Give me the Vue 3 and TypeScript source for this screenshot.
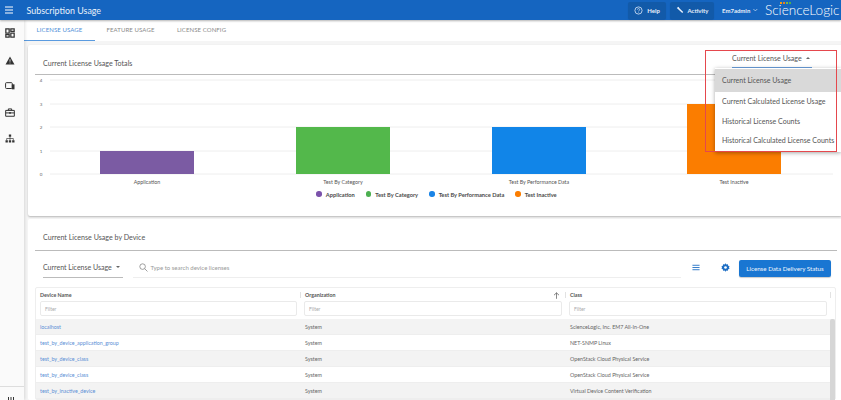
<script setup lang="ts">
const tabs = ['LICENSE USAGE', 'FEATURE USAGE', 'LICENSE CONFIG']
const ticks = [
  { label: '4', y: 5 },
  { label: '3', y: 29 },
  { label: '2', y: 52 },
  { label: '1', y: 76 },
  { label: '0', y: 99 },
]
const bars = [
  { name: 'Application', x: 65, w: 94, top: 76, color: '#7b5ba3', dot: '#7b52ab', cx: 112 },
  { name: 'Test By Category', x: 261, w: 94, top: 52, color: '#53b84b', dot: '#4caf50', cx: 308 },
  { name: 'Test By Performance Data', x: 457, w: 94, top: 52, color: '#1185e8', dot: '#1a84e6', cx: 504 },
  { name: 'Test Inactive', x: 652, w: 94, top: 29, color: '#fb7d00', dot: '#fb7d00', cx: 699 },
]
const menu = ['Current License Usage', 'Current Calculated License Usage', 'Historical License Counts', 'Historical Calculated License Counts']
const rows = [
  { d: 'localhost', o: 'System', c: 'ScienceLogic, Inc. EM7 All-In-One' },
  { d: 'test_by_device_application_group', o: 'System', c: 'NET-SNMP Linux' },
  { d: 'test_by_device_class', o: 'System', c: 'OpenStack Cloud Physical Service' },
  { d: 'test_by_device_class', o: 'System', c: 'OpenStack Cloud Physical Service' },
  { d: 'test_by_inactive_device', o: 'System', c: 'Virtual Device Content Verification' },
]
</script>

<template>
  <div class="app">
    <header class="top">
      <svg class="burger" width="10" height="8" viewBox="0 0 10 8"><path d="M1 1h8M1 4h8M1 7h8" stroke="#fff" stroke-width="1"/></svg>
      <span class="title">Subscription Usage</span>
      <span class="spacer"></span>
      <button class="hbtn help">
        <svg width="9" height="9" viewBox="0 0 10 10"><circle cx="5" cy="5" r="4" fill="none" stroke="#dbe7f7" stroke-width=".9"/><path d="M3.8 4c0-1.5 2.5-1.5 2.5 0 0 1-1.2 1-1.2 2M5.1 7.2v.6" fill="none" stroke="#dbe7f7" stroke-width=".8"/></svg>
        Help
      </button>
      <button class="hbtn activity">
        <svg width="8" height="8" viewBox="0 0 10 10"><path d="M1 2.5 3 .8l1.6 2.4L9 7.6 7.8 8.9 3.4 4.6z" fill="#e8f0fb"/></svg>
        Activity
      </button>
      <span class="user">Em7admin
        <svg width="6" height="4" viewBox="0 0 6 4"><path d="M.5.7 3 3.2 5.500.7" fill="none" stroke="#e8f0fb" stroke-width=".8"/></svg>
      </span>
      <span class="logo">
        <span class="dots"><i class="d1"></i><i class="d2"></i><i class="d3"></i><i class="d4"></i></span>
        ScienceLogic
      </span>
    </header>
    <div class="body">
      <aside class="side">
        <div class="side-icons">
          <svg width="12" height="12" viewBox="0 0 12 12"><path d="M1 1h4v5H1zM7 1h4v3H7zM7 6h4v5H7zM1 8h4v3H1z" fill="none" stroke="#333" stroke-width="1.500"/></svg>
          <svg width="12" height="11" viewBox="0 0 12 11"><path d="M6 .8 11.400 10.400H.6z" fill="#333"/><path d="M6 4v3M6 8v1" stroke="#fff" stroke-width=".9"/></svg>
          <svg width="12" height="10" viewBox="0 0 12 10"><rect x=".7" y="1" width="8" height="7" rx="1" fill="none" stroke="#333" stroke-width="1.200"/><rect x="8.200" y="3" width="3.200" height="6" fill="#333"/></svg>
          <svg width="12" height="11" viewBox="0 0 12 11"><path d="M4 3V1.200h4V3M.8 3h10.400v7H.8zM.8 6h10.400" fill="none" stroke="#333" stroke-width="1.200"/><rect x="5" y="5" width="2" height="2" fill="#333"/></svg>
          <svg width="12" height="11" viewBox="0 0 12 11"><path d="M4.600.8h2.800v2.600H4.600zM.6 7.600h2.800v2.600H.6zM4.600 7.600h2.800v2.600H4.600zM8.600 7.600h2.800v2.600H8.600z" fill="#333"/><path d="M6 3.400v4M2 7.600V5.500h8v2.100" fill="none" stroke="#333" stroke-width=".8"/></svg>
        </div>
        <div class="side-foot">
          <svg width="8" height="3" viewBox="0 0 8 3"><path d="M.5 0v3M3 0v3M5.500 0v3" stroke="#333" stroke-width="1"/></svg>
        </div>
      </aside>
      <main class="main">
        <nav class="tabs">
          <span v-for="(t, i) in tabs" :key="t" class="tab" :class="{ on: i === 0 }">{{ t }}</span>
        </nav>
        <section class="card totals">
          <div class="card-head">
            <span>Current License Usage Totals</span>
          </div>
          <svg class="chart" width="813" height="125" viewBox="0 0 813 125">
            <g v-for="t in ticks" :key="t.label">
              <line x1="15" x2="798" :y1="t.y" :y2="t.y" stroke="#eeeeee" stroke-width="1"/>
              <text x="6" :y="t.y + 2" class="tick" text-anchor="middle">{{ t.label }}</text>
            </g>
            <g v-for="b in bars" :key="b.name">
              <rect :x="b.x" :y="b.top" :width="b.w" :height="99 - b.top" :fill="b.color"/>
              <text :x="b.cx" y="109" class="cat" text-anchor="middle">{{ b.name }}</text>
            </g>
          </svg>
          <div class="legend">
            <span v-for="b in bars" :key="b.name" class="leg">
              <i :style="{ background: b.dot }"></i>{{ b.name }}
            </span>
          </div>
        </section>
        <section class="card devices">
          <div class="card-head"><span>Current License Usage by Device</span></div>
          <div class="toolbar">
            <span class="select">Current License Usage <b class="caret"></b></span>
            <div class="search">
              <svg width="9" height="9" viewBox="0 0 10 10"><circle cx="4" cy="4" r="3.100" fill="none" stroke="#888" stroke-width=".9"/><path d="M6.300 6.300 9.400 9.400" stroke="#888" stroke-width=".9"/></svg>
              <span>Type to search device licenses</span>
            </div>
            <svg class="tool-a" width="8" height="7" viewBox="0 0 9 7"><path d="M.5 1h8M.5 3.500h8M.5 6h8" stroke="#1f6fc4" stroke-width="1"/></svg>
            <svg class="tool-b" width="9" height="9" viewBox="0 0 10 10"><path d="M5 .4 6 1.700 7.700 1.300 8 3l1.600.9L8.800 5l.8 1.100L8 7l-.3 1.700L6 8.300 5 9.600 4 8.300l-1.700.4L2 7 .4 6.100 1.200 5 .4 3.900 2 3l.3-1.700L4 1.700z" fill="#1f6fc4"/><circle cx="5" cy="5" r="1.500" fill="#fff"/></svg>
            <button class="cta">License Data Delivery Status</button>
          </div>
          <div class="table">
            <div class="thead">
              <div class="th"><span class="lbl">Device Name</span><div class="filter">Filter</div></div>
              <div class="th sep"><span class="lbl">Organization
                <svg class="sort" width="7" height="7" viewBox="0 0 7 7"><path d="M3.500 6.800V.8M1 3.200 3.500.8 6 3.200" fill="none" stroke="#555" stroke-width=".7"/></svg>
              </span><div class="filter">Filter</div></div>
              <div class="th sep last"><span class="lbl">Class</span><div class="filter">Filter</div></div>
            </div>
            <div class="tbody">
              <div v-for="(r, i) in rows" :key="i" class="tr">
                <a class="link">{{ r.d }}</a>
                <span>{{ r.o }}</span>
                <span>{{ r.c }}</span>
              </div>
              <div class="scroll"></div>
            </div>
          </div>
        </section>
      </main>
    </div>

    <div class="trigger">Current License Usage <b class="caret up"></b></div>
    <ul class="menu">
      <li v-for="(m, i) in menu" :key="m" :class="{ sel: i === 0 }">{{ m }}</li>
    </ul>
    <div class="annot"></div>
  </div>
</template>

<style>
html, body { margin: 0; background: #fff; }
</style>

<style scoped>
.app { width: 841px; height: 400px; overflow: hidden; position: relative; font-family: Lato, "Open Sans", sans-serif; color: #555; background: #fff; display: flex; flex-direction: column; }
.top { height: 20px; flex: none; background: #1565c0; display: flex; align-items: center; color: #fff; box-shadow: 0 1px 2px rgba(0,0,0,.3); z-index: 3; position: relative; }
.burger { margin-left: 4px; }
.title { margin-left: 12.500px; font-size: 8.900px; color: #eaf2fb; }
.spacer { flex: 1; }
.hbtn { height: 17px; border: 0; border-radius: 2px; background: #125aa9; color: #e8f0fb; font: 700 6px Lato, sans-serif; display: flex; align-items: center; gap: 4px; padding: 0; justify-content: center; box-shadow: 0 1px 1px rgba(0,0,0,.12); }
.help { width: 38px; }
.activity { width: 44px; margin-left: 4px; }
.user { margin-left: 8px; font-size: 6px; font-weight: 700; color: #e8f0fb; display: flex; align-items: center; gap: 3px; width: 36px; white-space: nowrap; }
.logo { margin-left: 7px; width: 76px; font-size: 13.600px; font-weight: 300; color: #fff; white-space: nowrap; position: relative; }
.dots { position: absolute; left: 15px; top: 0; display: flex; gap: 1px; }
.dots i { width: 2px; height: 1.500px; }
.d1 { background: #f39c12; } .d2 { background: #e67e22; } .d3 { background: #7ab648; } .d4 { background: #4caf50; }
.body { flex: 1; display: flex; min-height: 0; }
.side { width: 24px; flex: none; background: #fafafa; box-shadow: 1px 0 3px rgba(0,0,0,.12); display: flex; flex-direction: column; z-index: 2; }
.side-icons { display: flex; flex-direction: column; align-items: center; gap: 15.500px; padding-top: 7px; flex: 1; width: 20px; }
.side-icons svg { width: 10px; }
.side-foot { height: 13px; border-top: 1px solid #ddd; display: flex; justify-content: center; align-items: flex-end; }
.main { flex: 1; min-width: 0; background: #f5f5f5; display: flex; flex-direction: column; }
.tabs { height: 21px; background: #fff; display: flex; flex: none; }
.tab { font-size: 6px; color: #8a8a8a; display: flex; align-items: center; justify-content: center; width: 71px; letter-spacing: .1px; padding-bottom: 2px; box-sizing: border-box; }
.tab.on { color: #4f8fd8; border-bottom: 1px solid #5a9be0; }
.card { background: #fff; margin-left: 4px; border-radius: 2px 0 0 2px; flex: none; }
.totals { margin-top: 4px; height: 171px; box-shadow: 0 1px 2px rgba(0,0,0,.25); padding-left: 7px; box-sizing: border-box; }
.card-head { height: 30px; border-bottom: 1px solid #bbb; display: flex; align-items: flex-end; padding: 0 0 6px 8px; box-sizing: border-box; font-size: 7.100px; color: #555; }
.chart { display: block; }
.tick { font: 4.500px Lato, sans-serif; fill: #666; }
.cat { font: 5.300px Lato, sans-serif; fill: #555; }
.legend { display: flex; justify-content: center; gap: 11px; margin-top: -11px; width: 813px; font-size: 5.700px; font-weight: 700; color: #4a4a4a; padding-right: 10px; box-sizing: border-box; }
.leg { display: flex; align-items: center; gap: 3px; white-space: nowrap; height: 10px; }
.leg i { width: 5.500px; height: 5.500px; border-radius: 50%; margin-right: 1px; }
.devices { margin-top: 3px; flex: 1; min-height: 0; padding-left: 7px; padding-right: 4px; overflow: hidden; }
.devices .card-head { height: 32px; padding-bottom: 8px; }
.toolbar { height: 27px; display: flex; align-items: flex-end; box-sizing: border-box; }
.select { width: 80px; height: 27px; margin-left: 8px; flex: none; box-sizing: border-box; border-bottom: 1px solid #bbb; font-size: 7px; display: flex; align-items: center; gap: 3px; white-space: nowrap; color: #555; padding-top: 6px; }
.caret { display: inline-block; border-left: 2px solid transparent; border-right: 2px solid transparent; border-top: 2px solid #666; margin-left: 1px; }
.caret.up { border-top: 0; border-bottom: 2px solid #666; }
.search { width: 548px; height: 27px; margin-left: 10px; flex: none; display: flex; align-items: center; gap: 2.500px; font-size: 6px; color: #999; border-bottom: 1px solid #eee; box-sizing: border-box; padding: 7px 0 0 6px; }
.tool-a { margin-left: 11px; margin-bottom: 7.500px; flex: none; }
.tool-b { margin-left: 21px; margin-bottom: 6px; flex: none; }
.cta { margin-left: 9px; margin-bottom: 1px; width: 92px; height: 17px; flex: none; background: #1976d2; color: #eef5fc; border: 0; border-radius: 2px; font: 6.200px Lato, sans-serif; padding: 0; box-shadow: 0 1px 1px rgba(0,0,0,.2); }
.table { margin-top: 9px; margin-right: 1px; border: 1px solid #eee; border-radius: 2px; box-sizing: border-box; }
.thead { display: grid; grid-template-columns: 264px 265px 1fr; height: 31px; }
.th { padding: 4px 3px 0 4px; box-sizing: border-box; display: flex; flex-direction: column; gap: 3px; position: relative; }
.th.last { padding-right: 8px; }
.sep::before { content: ""; position: absolute; left: 0; top: 4px; height: 6px; border-left: 1px solid #e2e2e2; }
.last::after { content: ""; position: absolute; right: 4px; top: 4px; height: 6px; border-left: 1px solid #e2e2e2; }
.lbl { font-size: 5.300px; font-weight: 700; color: #555; height: 6px; line-height: 6px; display: flex; justify-content: space-between; align-items: center; }
.sep .lbl { padding-left: 1px; }
.sort { margin-right: 2px; }
.filter { height: 15px; border: 1px solid #eaeaea; border-radius: 2px; box-sizing: border-box; font-size: 5px; color: #aaa; display: flex; align-items: center; padding-left: 4px; }
.tbody { position: relative; }
.tr { display: grid; grid-template-columns: 264px 265px 1fr; height: 16px; align-items: center; font-size: 5.350px; color: #666; border-bottom: 1px solid #eee; box-sizing: border-box; }
.tr > * { padding-left: 4px; }
.tr > :not(:first-child) { padding-left: 5px; }
.tr:nth-child(odd) { background: #f3f3f3; }
.link { color: #5b8fd6; }
.scroll { position: absolute; top: 0; right: 0; width: 5px; height: 100px; background: #d6d6d6; border-radius: 2px; }
.trigger { position: absolute; left: 732px; top: 50px; width: 80px; height: 18px; border-bottom: 1px solid #6a9fdc; box-sizing: border-box; font-size: 7.100px; color: #555; display: flex; align-items: center; gap: 3px; white-space: nowrap; padding-bottom: 1px; z-index: 5; }
.menu { position: absolute; left: 715px; top: 68px; width: 126px; height: 84px; margin: 0; padding: 1px 0 0; list-style: none; background: #fff; box-shadow: 0 1px 4px rgba(0,0,0,.35); z-index: 5; box-sizing: border-box; }
.menu li { height: 19.500px; line-height: 20px; padding-left: 7px; font-size: 7.050px; color: #555; white-space: nowrap; }
.menu li.sel { background: #d9d9d9; height: 23px; line-height: 24px; }
.annot { position: absolute; left: 705px; top: 50px; width: 132px; height: 102px; border: 1.500px solid #e5484d; box-sizing: border-box; z-index: 6; pointer-events: none; }
</style>
